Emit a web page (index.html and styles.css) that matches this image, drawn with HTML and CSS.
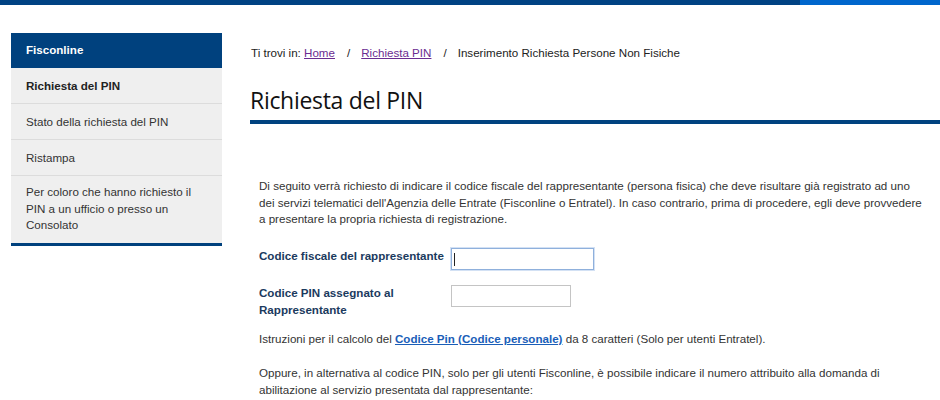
FILE: index.html
```html
<!DOCTYPE html>
<html lang="it">
<head>
<meta charset="utf-8">
<title>Richiesta del PIN</title>
<link rel="stylesheet" href="styles.css">
</head>
<body>
<div class="topbar"><div class="topbar-main"></div><div class="topbar-end"></div></div>
<div class="layout">
  <nav class="sidebar">
    <div class="side-head">Fisconline</div>
    <a class="side-item active">Richiesta del PIN</a>
    <a class="side-item">Stato della richiesta del PIN</a>
    <a class="side-item">Ristampa</a>
    <a class="side-item multi">Per coloro che hanno richiesto il PIN a un ufficio o presso un Consolato</a>
  </nav>
  <main class="content">
    <div class="breadcrumb">Ti trovi in: <a class="crumb">Home</a><span class="sep">/</span><a class="crumb">Richiesta PIN</a><span class="sep">/</span>Inserimento Richiesta Persone Non Fisiche</div>
    <h1 class="title">Richiesta del PIN</h1>
    <div class="body">
      <p class="text">Di seguito verrà richiesto di indicare il codice fiscale del rappresentante (persona fisica) che deve risultare già registrato ad uno dei servizi telematici dell'Agenzia delle Entrate (Fisconline o Entratel). In caso contrario, prima di procedere, egli deve provvedere a presentare la propria richiesta di registrazione.</p>
      <div class="form-row">
        <label class="label">Codice fiscale del rappresentante</label>
        <div class="input wide focus"><span class="caret"></span></div>
      </div>
      <div class="form-row">
        <label class="label">Codice PIN assegnato al Rappresentante</label>
        <div class="input"></div>
      </div>
      <p class="text note">Istruzioni per il calcolo del <a class="link">Codice Pin (Codice personale)</a> da 8 caratteri (Solo per utenti Entratel).</p>
      <p class="text">Oppure, in alternativa al codice PIN, solo per gli utenti Fisconline, è possibile indicare il numero attribuito alla domanda di abilitazione al servizio presentata dal rappresentante:</p>
    </div>
  </main>
</div>
</body>
</html>
```
FILE: styles.css
```css
* { box-sizing: border-box; }
html, body { margin: 0; padding: 0; background: #fff; overflow: hidden; }
body { font-family: "Liberation Sans", Arial, sans-serif; font-size: 11.6px; color: #222; width: 940px; height: 400px; }

.topbar { display: flex; height: 5px; }
.topbar-main { width: 800px; background: #004283; }
.topbar-end { flex: 1; background: #0066cc; }

.layout { display: flex; padding-top: 28px; }

.sidebar { width: 211px; margin-left: 11px; flex: none; display: flex; flex-direction: column; background: #efefef; border-bottom: 3px solid #00417d; align-self: flex-start; }
.side-head { background: #00417e; color: #fff; font-weight: bold; height: 35px; padding: 9px 15px 0; line-height: 16px; }
.side-item { display: block; color: #333; padding: 9px 15px 9px; height: 36px; border-top: 1px solid #dcdcdc; line-height: 17px; }
.side-item:nth-child(2) { border-top: none; height: 35px; }
.side-item.active { font-weight: bold; color: #222; }
.side-item.multi { height: 68px; padding: 8px 15px; line-height: 16.5px; }

.content { flex: 1; margin-left: 29px; padding-top: 12px; }
.breadcrumb { color: #222; line-height: 16px; }
.crumb { color: #6a2c91; text-decoration: underline; }
.sep { display: inline-block; margin: 0 11px 0 12px; }

.title { font-family: "Open Sans", "Liberation Sans", sans-serif; font-weight: 500; font-size: 23px; color: #111; margin: 24px 0 0 -1px; line-height: 30px; letter-spacing: -0.3px; height: 39px; border-bottom: 4px solid #00427f; }

.body { padding: 54px 17px 0 8px; }
.text { margin: 0; line-height: 16.5px; color: #333; }
.form-row { display: flex; align-items: flex-start; margin-top: 19px; }
.form-row + .form-row { margin-top: 14px; }
.label { width: 192px; font-weight: bold; color: #1b3a5e; line-height: 17px; padding-top: 0; }
.input { width: 120px; height: 22px; border: 1px solid #c4c4c4; background: #fff; position: relative; margin-top: 1px; }
.input.wide { width: 143px; }
.input.focus { border: 1px solid #8fb0dc; box-shadow: 0 0 0 1px #d3e1f4; }
.caret { position: absolute; left: 2px; top: 4px; width: 1px; height: 13px; background: #222; }
.note { margin-top: 13px; }
.note + .text { margin-top: 18px; }
.link { color: #1a5eb8; font-weight: bold; text-decoration: underline; }
```
